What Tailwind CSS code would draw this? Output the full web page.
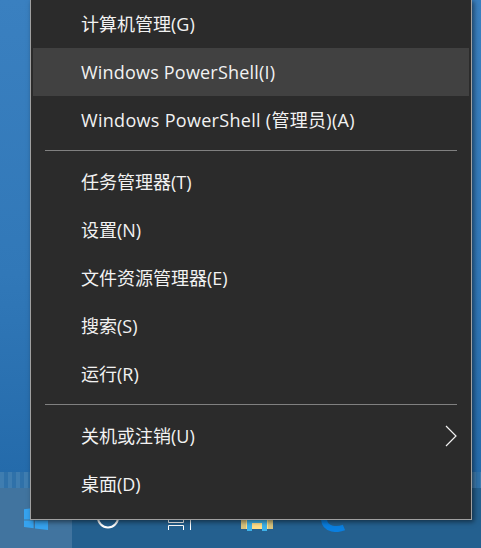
<!DOCTYPE html>
<html lang="en">
<head>
  <meta charset="UTF-8">
  <title>Win+X menu</title>
  <script src="https://cdn.jsdelivr.net/npm/@tailwindcss/browser@4"></script>
</head>
<body class="w-[481px] h-[548px] overflow-hidden font-['Open_Sans','Noto_Sans_CJK_SC',sans-serif]">
  <div class="relative w-[481px] h-[548px] overflow-hidden flex flex-col bg-gradient-to-b from-[#3a80c0] via-[#3178b8] to-[#1f66a6]">

    <div class="h-[472px]"></div>

    <!-- blurred desktop strip above the taskbar -->
    <div class="h-[16px] bg-[repeating-linear-gradient(90deg,#3f7db0_0px,#3f7db0_4px,#2f71a9_4px,#2f71a9_8px)]"></div>

    <!-- taskbar -->
    <div class="h-[60px] bg-[#24608f] flex items-center">
      <div class="w-[72px] h-full bg-[#41749f] flex items-center justify-center">
        <svg width="24" height="24" viewBox="0 0 24 24"><path fill="#36a3ef" d="M0 3.2 9.6 2v11.5H0zM11 1.8 24 0v13.5H11zM0 14.500h9.600v7.800L0 21zM11 14.500h13V24L11 22.400z"/></svg>
      </div>
      <svg width="24" height="24" viewBox="0 0 24 24" class="ml-[24px]"><circle cx="12" cy="11.5" r="10" fill="none" stroke="#fff" stroke-width="2"/></svg>
      <svg width="24" height="24" viewBox="0 0 24 24" class="ml-[48px]"><path fill="none" stroke="#fff" d="M0.500 10h15v6.500h-15zM0.500 24v-4.500h15V24M22.500 0v24"/></svg>
      <svg width="32" height="26" viewBox="0 0 32 26" class="ml-[49px]">
        <path fill="#ffe08a" d="M0 0h32v24H0z"/>
        <path fill="#d8c47e" d="M0 0h5v24H0zM27 0h5v24h-5z"/>
        <path fill="#3db2ea" d="M6 0h20v18H6zM6 18h5v8H6zM21 18h5v8h-5z"/>
        <path fill="#ffe08a" d="M11 18h10v6H11z"/>
      </svg>
      <svg width="24" height="28" viewBox="0 0 24 28" class="ml-[48px]"><path fill="none" stroke="#0a7fe0" stroke-width="6" d="M23 23.500c-6 2.500-19 3-20-8C2 8 7 3 13 3"/></svg>
    </div>

    <!-- context menu -->
    <div class="absolute left-[30px] top-[-1px] w-[442px] h-[521px] bg-[#2b2b2b] border border-[#a0a0a0] shadow-[2px_2px_5px_rgba(0,0,0,0.5)] text-[#f2f2f2] text-[18px]">
      <div class="mx-[2px]">
        <div class="h-[48px] pl-[48px] flex items-center">计算机管理(G)</div>
        <div class="h-[48px] pl-[48px] flex items-center bg-[#414141] tracking-[0.2px]">Windows PowerShell(I)</div>
        <div class="h-[48px] pl-[48px] flex items-center tracking-[0.3px]">Windows PowerShell (管理员)(A)</div>
      </div>
      <div class="mx-[14px] mt-[6px] mb-[7px] h-px bg-[#808080]"></div>
      <div class="mx-[2px]">
        <div class="h-[48px] pl-[48px] flex items-center">任务管理器(T)</div>
        <div class="h-[48px] pl-[48px] flex items-center">设置(N)</div>
        <div class="h-[48px] pl-[48px] flex items-center">文件资源管理器(E)</div>
        <div class="h-[48px] pl-[48px] flex items-center">搜索(S)</div>
        <div class="h-[48px] pl-[48px] flex items-center">运行(R)</div>
      </div>
      <div class="mx-[14px] mt-[6px] mb-[7px] h-px bg-[#808080]"></div>
      <div class="mx-[2px]">
        <div class="h-[48px] pl-[48px] pr-[11px] flex items-center justify-between">
          <span>关机或注销(U)</span>
          <svg width="14" height="22" viewBox="0 0 14 22"><path fill="none" stroke="#f2f2f2" stroke-width="1.200" d="M2 1l10 10L2 21"/></svg>
        </div>
        <div class="h-[48px] pl-[48px] flex items-center">桌面(D)</div>
      </div>
    </div>
  </div>
</body>
</html>
